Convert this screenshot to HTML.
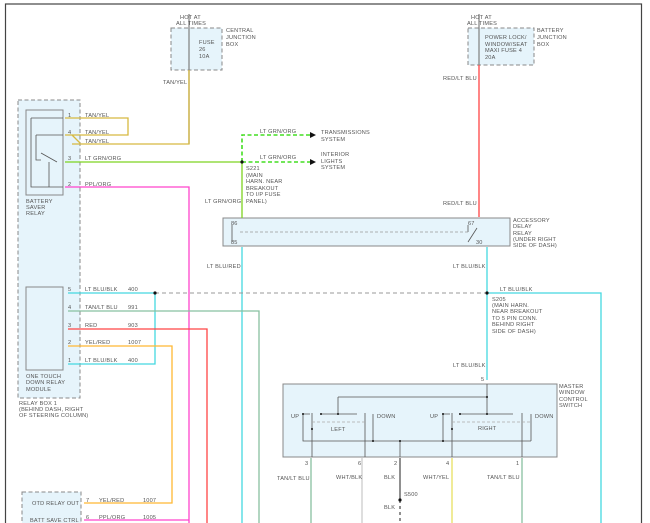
<!DOCTYPE html>
<html><head><meta charset="utf-8"><style>
html,body{margin:0;padding:0;background:#fff;width:650px;height:523px;overflow:hidden}
svg text{font-family:"Liberation Sans",sans-serif;font-size:5.6px;fill:#555;letter-spacing:0.2px}
</style></head><body>
<svg width="650" height="523" viewBox="0 0 650 523" xmlns="http://www.w3.org/2000/svg">
<rect x="5.5" y="4" width="636" height="530" fill="none" stroke="#444" stroke-width="1.2"/>
<g fill="#e6f4fb" stroke="#888" stroke-width="1" stroke-dasharray="4,2.5">
<rect x="171" y="28" width="51" height="42"/>
<rect x="468" y="28" width="66" height="37"/>
<rect x="18" y="100" width="62" height="298"/>
<rect x="22" y="492" width="59" height="40"/>
</g>
<g fill="#e6f4fb" stroke="#888" stroke-width="1">
<rect x="26" y="110" width="37" height="85"/>
<rect x="26" y="287" width="37" height="83"/>
<rect x="223" y="218" width="287" height="28"/>
<rect x="283" y="384" width="274" height="73"/>
</g>
<g fill="none" stroke-width="1.3">
<path d="M189 14V144" stroke="#888"/>
<path d="M189 70V144H72M65 118H128V135H65M72 135L80 143" stroke="#d7b940"/>
<path d="M479 14V65" stroke="#888"/>
<path d="M479 65V217" stroke="#ff4444"/>
<path d="M65 162H242V218" stroke="#7ed321"/>
<path d="M65 187H189V523" stroke="#ff44cc"/>
<path d="M242 162V135H310M242 162H310" stroke="#44dd22" stroke-dasharray="4,2.5" stroke-width="1.6"/>
<path d="M242 247V523" stroke="#44d8e0"/>
<path d="M487 247V380" stroke="#44d8e0"/>
<path d="M487 293H601V523" stroke="#44d8e0"/>
<path d="M155 293H487" stroke="#999" stroke-dasharray="4,3" stroke-width="1"/>
<path d="M68 293H155V364H68" stroke="#44d8e0"/>
<path d="M68 311H259V523" stroke="#88c0a0"/>
<path d="M68 329H207V523" stroke="#ff4444"/>
<path d="M68 346H172V503H84" stroke="#ffb833"/>
<path d="M84 520H189" stroke="#ff44cc"/>
<path d="M311 458V523M522 458V523" stroke="#88c0a0"/>
<path d="M362 458V523" stroke="#ccc"/>
<path d="M400 458V500" stroke="#555"/>
<path d="M400 500V523" stroke="#555" stroke-dasharray="3,3"/>
<path d="M452 458V523" stroke="#e8e060"/>
</g>
<g fill="none" stroke="#555" stroke-width="0.8">
<path d="M31 118H63M31 118V187H63M36 135H63M36 135V160H41M41 153L57 162M49 162V187"/>
<path d="M232 225V242M468 225V232M468 242L477 228"/>
<path d="M240 232H470" stroke="#999" stroke-dasharray="3,2"/>
<path d="M487 384V414M338 397H487M338 397V414M321 414H357M303 414H310M303 414V441H531M312 413V457M365 413V457M373 414V441M400 441V457M443 414H450M443 414V441M452 413V457M460 414H513M522 413V457M531 414V441"/>
<path d="M312 422H365M452 422H530" stroke="#aaa" stroke-dasharray="3,2"/>
</g>
<path d="M310 132l6 3-6 3zM310 159l6 3-6 3z" fill="#111"/>
<g fill="#111"><circle cx="242" cy="162" r="1.6"/><circle cx="155" cy="293" r="1.6"/><circle cx="487" cy="293" r="1.6"/><circle cx="400" cy="500" r="1.6"/>
<circle cx="303" cy="414" r="1"/><circle cx="321" cy="414" r="1"/><circle cx="338" cy="414" r="1"/><circle cx="312" cy="429" r="1"/><circle cx="373" cy="441" r="1"/><circle cx="400" cy="441" r="1"/><circle cx="443" cy="441" r="1"/><circle cx="443" cy="414" r="1"/><circle cx="460" cy="414" r="1"/><circle cx="487" cy="414" r="1"/><circle cx="487" cy="397" r="1"/><circle cx="452" cy="429" r="1"/></g>
<text x="180" y="19">HOT AT</text><text x="176" y="25">ALL TIMES</text>
<text x="226" y="32">CENTRAL</text><text x="226" y="39">JUNCTION</text><text x="226" y="46">BOX</text>
<text x="199" y="44">FUSE</text><text x="199" y="51">26</text><text x="199" y="58">10A</text>
<text x="163" y="84">TAN/YEL</text>
<text x="471" y="19">HOT AT</text><text x="467" y="25">ALL TIMES</text>
<text x="485" y="39">POWER LOCK/</text><text x="485" y="46">WINDOW/SEAT</text><text x="485" y="52">MAXI FUSE 4</text><text x="485" y="59">20A</text>
<text x="537" y="32">BATTERY</text><text x="537" y="39">JUNCTION</text><text x="537" y="46">BOX</text>
<text x="443" y="80">RED/LT BLU</text><text x="443" y="205">RED/LT BLU</text>
<text x="85" y="117">TAN/YEL</text><text x="85" y="134">TAN/YEL</text><text x="85" y="143">TAN/YEL</text>
<text x="85" y="160">LT GRN/ORG</text><text x="85" y="186">PPL/ORG</text>
<text x="68" y="117">1</text><text x="68" y="134">4</text><text x="68" y="160">3</text><text x="68" y="186">2</text>
<text x="26" y="203">BATTERY</text><text x="26" y="209">SAVER</text><text x="26" y="215">RELAY</text>
<text x="260" y="133">LT GRN/ORG</text><text x="260" y="159">LT GRN/ORG</text>
<text x="321" y="134">TRANSMISSIONS</text><text x="321" y="141">SYSTEM</text>
<text x="321" y="156">INTERIOR</text><text x="321" y="163">LIGHTS</text><text x="321" y="169">SYSTEM</text>
<text x="246" y="170">S221</text><text x="246" y="177">(MAIN</text><text x="246" y="183">HARN. NEAR</text><text x="246" y="190">BREAKOUT</text><text x="246" y="196">TO I/P FUSE</text><text x="246" y="203">PANEL)</text>
<text x="205" y="203">LT GRN/ORG</text>
<text x="231" y="225">86</text><text x="231" y="244">85</text><text x="468" y="225">67</text><text x="476" y="244">30</text>
<text x="513" y="222">ACCESSORY</text><text x="513" y="228">DELAY</text><text x="513" y="235">RELAY</text><text x="513" y="241">(UNDER RIGHT</text><text x="513" y="247">SIDE OF DASH)</text>
<text x="207" y="268">LT BLU/RED</text><text x="453" y="268">LT BLU/BLK</text><text x="500" y="291">LT BLU/BLK</text>
<text x="492" y="301">S205</text><text x="492" y="307">(MAIN HARN.</text><text x="492" y="313">NEAR BREAKOUT</text><text x="492" y="320">TO 5 PIN CONN.</text><text x="492" y="326">BEHIND RIGHT</text><text x="492" y="333">SIDE OF DASH)</text>
<text x="453" y="367">LT BLU/BLK</text><text x="481" y="381">5</text>
<text x="68" y="291">5</text><text x="68" y="309">4</text><text x="68" y="327">3</text><text x="68" y="344">2</text><text x="68" y="362">1</text>
<text x="85" y="291">LT BLU/BLK</text><text x="85" y="309">TAN/LT BLU</text><text x="85" y="327">RED</text><text x="85" y="344">YEL/RED</text><text x="85" y="362">LT BLU/BLK</text>
<text x="128" y="291">400</text><text x="128" y="309">991</text><text x="128" y="327">903</text><text x="128" y="344">1007</text><text x="128" y="362">400</text>
<text x="26" y="378">ONE TOUCH</text><text x="26" y="384">DOWN RELAY</text><text x="26" y="391">MODULE</text>
<text x="19" y="405">RELAY BOX 1</text><text x="19" y="411">(BEHIND DASH, RIGHT</text><text x="19" y="417">OF STEERING COLUMN)</text>
<text x="559" y="388">MASTER</text><text x="559" y="394">WINDOW</text><text x="559" y="401">CONTROL</text><text x="559" y="407">SWITCH</text>
<text x="291" y="418">UP</text><text x="377" y="418">DOWN</text><text x="430" y="418">UP</text><text x="535" y="418">DOWN</text>
<text x="331" y="431">LEFT</text><text x="478" y="430">RIGHT</text>
<text x="305" y="465">3</text><text x="358" y="465">6</text><text x="394" y="465">2</text><text x="446" y="465">4</text><text x="516" y="465">1</text>
<text x="277" y="480">TAN/LT BLU</text><text x="336" y="479">WHT/BLK</text><text x="384" y="479">BLK</text><text x="423" y="479">WHT/YEL</text><text x="487" y="479">TAN/LT BLU</text>
<text x="404" y="496">S500</text><text x="384" y="509">BLK</text>
<text x="32" y="505">OTD RELAY OUT</text><text x="30" y="522">BATT SAVE CTRL</text>
<text x="86" y="502">7</text><text x="86" y="519">6</text>
<text x="99" y="502">YEL/RED</text><text x="99" y="519">PPL/ORG</text><text x="143" y="502">1007</text><text x="143" y="519">1005</text>
</svg>
</body></html>
